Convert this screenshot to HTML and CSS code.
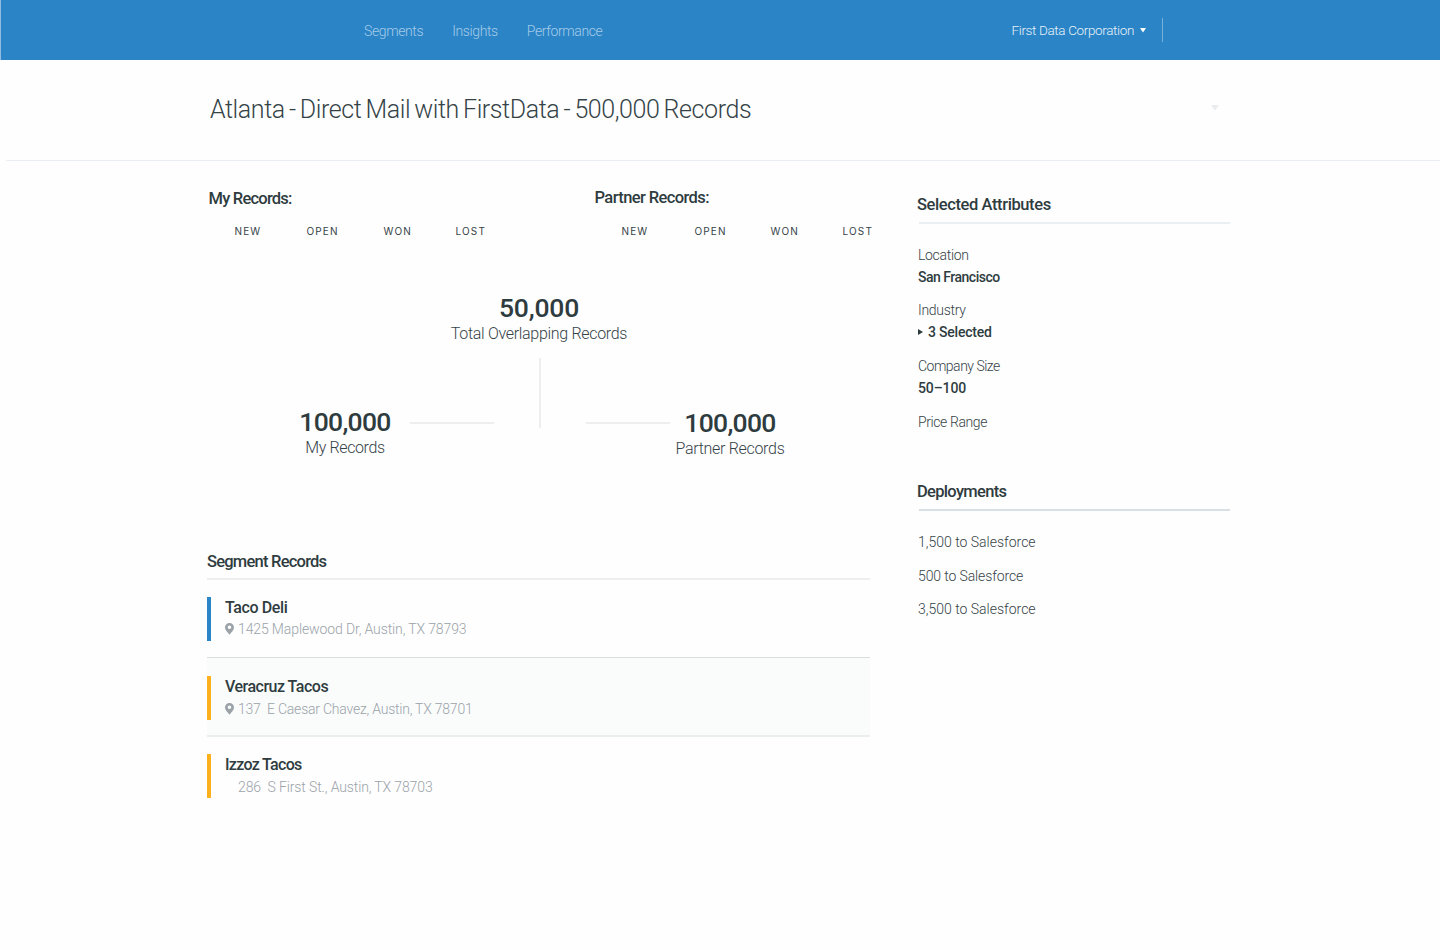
FILE: index.html
```html
<!DOCTYPE html>
<html lang="en">
<head>
<meta charset="utf-8">
<title>Atlanta - Direct Mail with FirstData</title>
<link rel="stylesheet" href="styles.css">
</head>
<body>
<header class="topbar">
  <nav class="nav"><a class="nav-link">Segments</a><a class="nav-link">Insights</a><a class="nav-link">Performance</a></nav>
  <div class="account">
    <span class="account-name">First Data Corporation</span>
    <svg class="account-caret" width="6" height="5" viewBox="0 0 6 5"><path d="M0 0h6L3 4.5z" fill="#fff"/></svg>
    <span class="account-divider"></span>
  </div>
</header>
<section class="titlebar">
  <h1 class="page-title">Atlanta - Direct Mail with FirstData - 500,000 Records</h1>
  <svg class="title-caret" width="8" height="6" viewBox="0 0 8 6"><path d="M0 0h8L4 5.5z" fill="#e9ecee"/></svg>
</section>
<main class="content">
  <div class="primary">
    <section class="record-groups">
      <div class="group">
        <h2 class="heading track-8">My Records:</h2>
        <div class="statuses"><span>NEW</span><span>OPEN</span><span>WON</span><span>LOST</span></div>
      </div>
      <div class="group group-partner">
        <h2 class="heading track-6">Partner Records:</h2>
        <div class="statuses"><span>NEW</span><span>OPEN</span><span>WON</span><span>LOST</span></div>
      </div>
    </section>
    <section class="overlap">
      <div class="metric metric-total"><div class="metric-value">50,000</div><div class="metric-label track-3">Total Overlapping Records</div></div>
      <div class="metric metric-mine"><div class="metric-value track-6">100,000</div><div class="metric-label track-4">My Records</div></div>
      <div class="link link-left"></div>
      <div class="link-vertical"></div>
      <div class="link link-right"></div>
      <div class="metric metric-partner"><div class="metric-value track-6">100,000</div><div class="metric-label track-3">Partner Records</div></div>
    </section>
    <section class="segments">
      <h2 class="heading segments-heading track-8">Segment Records</h2>
      <article class="record">
        <div class="record-body record-blue">
          <h3 class="record-name track-4">Taco Deli</h3>
          <p class="record-address track-1"><svg class="pin" width="9" height="12" viewBox="0 0 9 12"><path fill="#9ba3a9" fill-rule="evenodd" d="M4.5 0A4.4 4.4 0 0 0 0 4.4C0 7.2 2.8 9 4.5 11.7 6.200 9 9 7.200 9 4.400A4.400 4.400 0 0 0 4.500 0zM4.500 2.500a1.800 1.800 0 1 1 0 3.600 1.800 1.800 0 0 1 0-3.600z"/></svg><span>1425 Maplewood Dr, Austin, TX 78793</span></p>
        </div>
      </article>
      <article class="record record-active">
        <div class="record-body record-amber">
          <h3 class="record-name track-5">Veracruz Tacos</h3>
          <p class="record-address track-2"><svg class="pin" width="9" height="12" viewBox="0 0 9 12"><path fill="#9ba3a9" fill-rule="evenodd" d="M4.5 0A4.4 4.4 0 0 0 0 4.4C0 7.2 2.8 9 4.5 11.7 6.200 9 9 7.200 9 4.400A4.400 4.400 0 0 0 4.500 0zM4.500 2.500a1.800 1.800 0 1 1 0 3.600 1.800 1.800 0 0 1 0-3.600z"/></svg><span>137&nbsp; E Caesar Chavez, Austin, TX 78701</span></p>
        </div>
      </article>
      <article class="record">
        <div class="record-body record-amber">
          <h3 class="record-name track-7">Izzoz Tacos</h3>
          <p class="record-address track-1"><span class="pin"></span><span>286&nbsp; S First St., Austin, TX 78703</span></p>
        </div>
      </article>
    </section>
  </div>
  <aside class="sidebar">
    <h2 class="heading track-4">Selected Attributes</h2>
    <div class="rule"></div>
    <dl class="attributes">
      <div><dt class="track-3">Location</dt><dd class="track-5">San Francisco</dd></div>
      <div><dt class="track-3">Industry</dt><dd class="track-2 expandable"><svg class="expand-caret" width="5" height="6" viewBox="0 0 5 6"><path d="M0 0v6l5-3z" fill="#2f3c3f"/></svg>3 Selected</dd></div>
      <div><dt class="track-5">Company Size</dt><dd class="track-1">50–100</dd></div>
      <div><dt class="track-4">Price Range</dt></div>
    </dl>
    <h2 class="heading deployments-heading track-7">Deployments</h2>
    <div class="rule rule-dark"></div>
    <ul class="deployments">
      <li>1,500 to Salesforce</li>
      <li class="track-1">500 to Salesforce</li>
      <li>3,500 to Salesforce</li>
    </ul>
  </aside>
</main>
</body>
</html>
```
FILE: styles.css
```css
* { box-sizing: border-box; margin: 0; padding: 0; }
body {
  background: #fefefe;
  color: #354347;
  font: 300 14px/22px Roboto, "Open Sans", sans-serif;
  white-space: nowrap;
}

/* Letter tracking steps */
.track-1 { letter-spacing: -.12px; }
.track-2 { letter-spacing: -.22px; }
.track-3 { letter-spacing: -.31px; }
.track-4 { letter-spacing: -.4px; }
.track-5 { letter-spacing: -.5px; }
.track-6 { letter-spacing: -.6px; }
.track-7 { letter-spacing: -.68px; }
.track-8 { letter-spacing: -.77px; }

.topbar {
  display: flex;
  justify-content: space-between;
  height: 60px;
  padding: 0 277px 0 363px;
  background: #2b84c6;
  border-left: 1px solid #92bde0;
}
.nav { display: flex; align-items: center; gap: 29px; padding-top: 2px; color: #a5cbe8; letter-spacing: -.39px; }
.account { display: flex; align-items: center; color: #e6f1f9; }
.account-name { font-size: 13.5px; letter-spacing: -.36px; }
.account-caret { margin-left: 6px; }
.account-divider { width: 1px; height: 24px; margin-left: 16px; background: #7ab1db; }

.titlebar {
  display: flex;
  justify-content: space-between;
  height: 101px;
  margin-left: 6px;
  padding: 34px 221px 0 204px;
  border-bottom: 1px solid #eaeef2;
}
.page-title { font-size: 25px; line-height: 32px; font-weight: 300; letter-spacing: -.42px; word-spacing: -1.5px; }
.title-caret { margin-top: 11px; }

.content { display: grid; grid-template-columns: 663px 313px; column-gap: 47px; padding-left: 207px; }
.heading { font-size: 16.5px; line-height: 20px; font-weight: 500; color: #2f3c3f; }

.primary { padding-top: 28px; }
.record-groups { display: grid; grid-template-columns: 386px 1fr; }
.group { padding-left: 1.5px; }
.group-partner .heading { margin-top: -1px; }
.statuses {
  display: grid;
  grid-template-columns: 72px 77px 72px auto;
  justify-content: start;
  margin-top: 16px;
  padding-left: 26px;
  font: 400 10px/12px Inter, sans-serif;
  letter-spacing: 1.15px;
}
.group-partner .statuses { grid-template-columns: 73px 76px 72px auto; padding-left: 27px; margin-top: 17px; }

/* Overlap diagram: three metrics joined by connector lines */
.overlap {
  display: grid;
  grid-template-columns: 92px 19px 84px 92px 84px 5px 110px;
  grid-template-rows: 65px 49px 51px;
  margin: 56px 0 94px 92px;
}
.metric { text-align: center; }
.metric-value { font-size: 26.5px; line-height: 30px; font-weight: 500; color: #2f3c3f; letter-spacing: -.2px; }
.metric-label { font-size: 16px; line-height: 20px; margin-top: 1px; }
.metric-total { grid-area: 1 / 3 / 2 / 6; padding-right: 2px; }
.metric-mine { grid-area: 3 / 1; }
.metric-partner { grid-area: 3 / 7; padding-top: 1px; }
.metric-value.track-6 { letter-spacing: -.7px; }
.link { height: 2px; margin-top: 15px; background: #eee; }
.link-left { grid-area: 3 / 3; }
.link-right { grid-area: 3 / 5; }
.link-vertical { grid-area: 2 / 4 / 4 / 5; width: 2px; height: 70px; margin-left: 45px; background: #eee; }

.segments-heading { padding-bottom: 6px; height: 28px; border-bottom: 2px solid #eee; }
.record { height: 77px; padding-top: 17px; }
.record-active { height: 80px; padding-top: 18px; background: #fafcfc; border-top: 1px solid #d8dddf; border-bottom: 2px solid #ebeeef; }
.record-body { height: 44px; padding-left: 14px; border-left: 4px solid; }
.record-blue { border-color: #2b84c6; }
.record-amber { border-color: #fbb01c; }
.record-name { font-size: 16px; line-height: 22px; font-weight: 500; color: #2f3c3f; }
.record-address { display: flex; align-items: center; color: #9ba3a9; }
.record:not(.record-active) .record-blue .record-address, .record-blue .record-address { margin-top: -1px; }
.pin { width: 9px; margin-right: 4px; }

.sidebar { padding-top: 34px; }
.rule { height: 2px; margin: 7px 0 20px 2px; background: #eaeff2; }
.rule-dark { background: #d8dfe5; }
.attributes { display: flex; flex-direction: column; gap: 11.4px; padding-left: 1px; }
.attributes > div:not(:last-child) { height: 44px; }
.attributes > div:last-child { padding-top: 1px; }
.attributes dd { font-weight: 500; color: #2f3c3f; }
.expandable { display: flex; align-items: center; }
.expand-caret { margin-right: 5px; }
.deployments-heading { margin-top: 48.8px; }
.deployments { display: flex; flex-direction: column; gap: 11.5px; padding-left: 1px; list-style: none; }
.deployments li:nth-child(2) { margin: .5px 0 -.5px; }
```
